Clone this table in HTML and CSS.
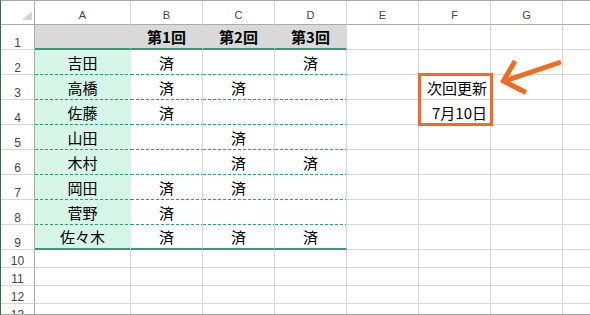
FILE: index.html
```html
<!DOCTYPE html>
<html lang="ja">
<head>
<meta charset="utf-8">
<title>Sheet</title>
<link rel="stylesheet" href="styles.css">
</head>
<body>
<div class="sheet">
  <div class="cell corner"><span class="tri"></span></div>
  <div class="cell ch">A</div><div class="cell ch">B</div><div class="cell ch">C</div><div class="cell ch">D</div><div class="cell ch">E</div><div class="cell ch">F</div><div class="cell ch">G</div><div class="cell ch"></div>

  <div class="cell rh">1</div>
  <div class="cell hd gl"></div><div class="cell hd gl">第1回</div><div class="cell hd gl">第2回</div><div class="cell hd gl">第3回</div><div class="cell"></div><div class="cell"></div><div class="cell"></div><div class="cell"></div>

  <div class="cell rh">2</div>
  <div class="cell nm dl">吉田</div><div class="cell dl">済</div><div class="cell dl"></div><div class="cell dl">済</div><div class="cell"></div><div class="cell"></div><div class="cell"></div><div class="cell"></div>

  <div class="cell rh">3</div>
  <div class="cell nm dl">高橋</div><div class="cell dl">済</div><div class="cell dl">済</div><div class="cell dl"></div><div class="cell"></div><div class="cell r">次回更新</div><div class="cell"></div><div class="cell"></div>

  <div class="cell rh">4</div>
  <div class="cell nm dl">佐藤</div><div class="cell dl">済</div><div class="cell dl"></div><div class="cell dl"></div><div class="cell"></div><div class="cell r">7月10日</div><div class="cell"></div><div class="cell"></div>

  <div class="cell rh">5</div>
  <div class="cell nm dl">山田</div><div class="cell dl"></div><div class="cell dl">済</div><div class="cell dl"></div><div class="cell"></div><div class="cell"></div><div class="cell"></div><div class="cell"></div>

  <div class="cell rh">6</div>
  <div class="cell nm dl">木村</div><div class="cell dl"></div><div class="cell dl">済</div><div class="cell dl">済</div><div class="cell"></div><div class="cell"></div><div class="cell"></div><div class="cell"></div>

  <div class="cell rh">7</div>
  <div class="cell nm dl">岡田</div><div class="cell dl">済</div><div class="cell dl">済</div><div class="cell dl"></div><div class="cell"></div><div class="cell"></div><div class="cell"></div><div class="cell"></div>

  <div class="cell rh">8</div>
  <div class="cell nm dl">菅野</div><div class="cell dl">済</div><div class="cell dl"></div><div class="cell dl"></div><div class="cell"></div><div class="cell"></div><div class="cell"></div><div class="cell"></div>

  <div class="cell rh">9</div>
  <div class="cell nm gl">佐々木</div><div class="cell gl">済</div><div class="cell gl">済</div><div class="cell gl">済</div><div class="cell"></div><div class="cell"></div><div class="cell"></div><div class="cell"></div>

  <div class="cell rh">10</div>
  <div class="cell"></div><div class="cell"></div><div class="cell"></div><div class="cell"></div><div class="cell"></div><div class="cell"></div><div class="cell"></div><div class="cell"></div>

  <div class="cell rh">11</div>
  <div class="cell"></div><div class="cell"></div><div class="cell"></div><div class="cell"></div><div class="cell"></div><div class="cell"></div><div class="cell"></div><div class="cell"></div>

  <div class="cell rh">12</div>
  <div class="cell"></div><div class="cell"></div><div class="cell"></div><div class="cell"></div><div class="cell"></div><div class="cell"></div><div class="cell"></div><div class="cell"></div>

  <div class="cell rh">13</div>
  <div class="cell"></div><div class="cell"></div><div class="cell"></div><div class="cell"></div><div class="cell"></div><div class="cell"></div><div class="cell"></div><div class="cell"></div>

  <div class="callout"></div>
  <svg class="arrow" width="75" height="46" viewBox="0 0 75 46">
    <line x1="10" y1="29" x2="66" y2="10" stroke="#f26b21" stroke-width="5" stroke-linecap="butt"/>
    <polyline points="20,9 8.4,29 31,40.5" fill="none" stroke="#f26b21" stroke-width="5" stroke-linecap="butt" stroke-linejoin="miter"/>
  </svg>
</div>
</body>
</html>
```

FILE: styles.css
```css
* {
  box-sizing: border-box;
}

body {
  margin: 0;
  background: #ffffff;
}

.sheet {
  position: relative;
  width: 590px;
  height: 315px;
  border-left: 1px solid #2f6e4d;
  border-top: 1px solid #a8a8a8;
  border-bottom: 1px solid #a8a8a8;
  overflow: hidden;
  display: grid;
  grid-template-columns: 34px 96px repeat(6, 72px) 1fr;
  grid-template-rows: 24px repeat(9, 25px) repeat(4, 18px);
  background: #ffffff;
  font-family: "Noto Sans CJK JP", sans-serif;
}

.cell {
  display: flex;
  align-items: center;
  justify-content: center;
  min-width: 0;
  border-right: 1px solid #d4d4d4;
  border-bottom: 1px solid #d4d4d4;
  font-size: 15px;
  line-height: 15px;
  color: #000000;
  white-space: nowrap;
}

.sheet > .cell:nth-child(9n) {
  border-right: 0;
}

.corner {
  justify-content: flex-end;
  align-items: flex-end;
  padding: 0 2px 4px 0;
  border-right-color: #ababab;
  border-bottom-color: #ababab;
}

.tri {
  display: block;
  width: 10px;
  height: 9px;
  background: #d6d6d6;
  clip-path: polygon(100% 0, 100% 100%, 0 100%);
}

.ch {
  align-items: flex-end;
  padding-bottom: 3px;
  font-family: "Liberation Sans", Arial, sans-serif;
  font-size: 11px;
  line-height: 11px;
  color: #444444;
  border-bottom-color: #ababab;
}

.rh {
  align-items: flex-end;
  font-family: "Liberation Sans", Arial, sans-serif;
  font-size: 12px;
  line-height: 12px;
  color: #444444;
  border-right-color: #ababab;
}

.hd {
  background-color: #d9d9d9;
  border-right-color: transparent;
  font-weight: bold;
}

.nm {
  background-color: #d5f5e9;
  border-right-color: transparent;
}

.gl {
  border-bottom: 2px solid #2f9b78;
}

.dl {
  border-bottom-color: transparent;
  background-image: linear-gradient(90deg, #2f9b78 3px, transparent 3px);
  background-size: 5px 1px;
  background-repeat: repeat-x;
  background-position: left bottom;
  background-origin: border-box;
}

.r {
  justify-content: flex-end;
  padding-right: 3px;
}

.callout {
  position: absolute;
  left: 417px;
  top: 72px;
  width: 75px;
  height: 53px;
  border: 3px solid #f26b21;
}

.arrow {
  position: absolute;
  left: 494px;
  top: 51px;
}
```
